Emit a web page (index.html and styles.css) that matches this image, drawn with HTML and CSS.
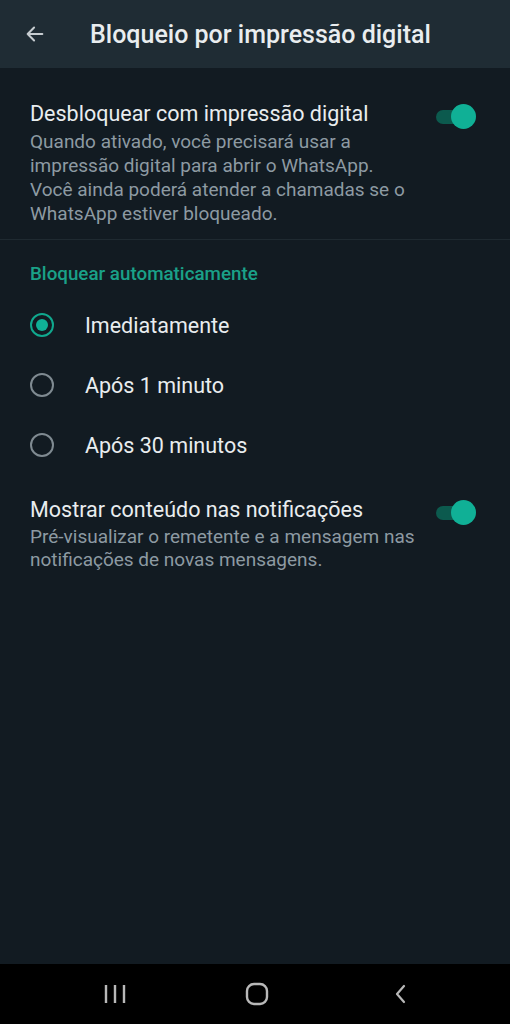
FILE: index.html
```html
<!DOCTYPE html>
<html lang="pt-BR">
<head>
    <meta charset="UTF-8">
    <meta name="viewport" content="width=device-width, initial-scale=1.0">
    <title>Bloqueio por impressão digital</title>
    <link rel="stylesheet" href="styles.css">
</head>
<body>
    <header class="appbar">
        <svg class="back" width="22" height="22" viewBox="0 0 24 24">
            <path d="M20 12H4M11 5l-7 7 7 7" fill="none" stroke="#c6ccd0" stroke-width="2.2" stroke-linecap="round" stroke-linejoin="round"/>
        </svg>
        <h1>Bloqueio por impressão digital</h1>
    </header>

    <main class="content">
        <div class="setting first">
            <div class="text">
                <div class="title">Desbloquear com impressão digital</div>
                <div class="desc">Quando ativado, você precisará usar a impressão digital para abrir o WhatsApp. Você ainda poderá atender a chamadas se o WhatsApp estiver bloqueado.</div>
            </div>
            <div class="switch"></div>
        </div>

        <div class="divider"></div>

        <div class="section-title">Bloquear automaticamente</div>
        <div class="radio-row">
            <span class="radio checked"></span>
            <span class="radio-label">Imediatamente</span>
        </div>
        <div class="radio-row">
            <span class="radio"></span>
            <span class="radio-label">Após 1 minuto</span>
        </div>
        <div class="radio-row">
            <span class="radio"></span>
            <span class="radio-label">Após 30 minutos</span>
        </div>

        <div class="setting second">
            <div class="text">
                <div class="title">Mostrar conteúdo nas notificações</div>
                <div class="desc narrow">Pré-visualizar o remetente e a mensagem nas notificações de novas mensagens.</div>
            </div>
            <div class="switch"></div>
        </div>
    </main>

    <nav class="navbar">
        <svg width="22" height="22" viewBox="0 0 22 22">
            <path d="M2 2v18M11 2v18M20 2v18" stroke="#b8b8b8" stroke-width="2.4"/>
        </svg>
        <svg width="24" height="24" viewBox="0 0 24 24">
            <rect x="2" y="2" width="20" height="20" rx="7" fill="none" stroke="#b8b8b8" stroke-width="2.4"/>
        </svg>
        <svg width="22" height="22" viewBox="0 0 22 22">
            <path d="M16 3l-7 8 7 8" fill="none" stroke="#b8b8b8" stroke-width="2.2" stroke-linecap="round" stroke-linejoin="round"/>
        </svg>
    </nav>
</body>
</html>
```

FILE: styles.css
```css
html, body {
    margin: 0;
    height: 100%;
}
body {
    display: flex;
    flex-direction: column;
    background-color: #121b22;
    font-family: Roboto, "Noto Sans", Arial, sans-serif;
    color: #e9edef;
}
.appbar {
    display: flex;
    align-items: center;
    height: 68px;
    padding-left: 24px;
    background-color: #1f2c34;
    flex-shrink: 0;
}
.appbar h1 {
    margin: 0 0 0 44px;
    font-size: 25px;
    font-weight: 500;
    color: #e9edef;
}
.back {
    display: block;
}
.content {
    flex: 1;
}
.setting {
    display: flex;
    justify-content: space-between;
    align-items: flex-start;
    padding: 0 34px 0 30px;
}
.setting.first {
    padding-top: 33px;
    padding-bottom: 13px;
}
.setting.second {
    padding-top: 22px;
}
.title {
    font-size: 21.5px;
    line-height: 26px;
    color: #e9edef;
}
.desc {
    margin-top: 3px;
    font-size: 19px;
    line-height: 24px;
    color: #8d9aa2;
    max-width: 380px;
}
.desc.narrow {
    margin-top: 2px;
    line-height: 23px;
    max-width: 395px;
}
.switch {
    position: relative;
    width: 40px;
    height: 26px;
    margin-top: 3px;
    flex-shrink: 0;
}
.switch::before {
    content: "";
    position: absolute;
    left: 0;
    top: 6px;
    width: 34px;
    height: 14px;
    border-radius: 7px;
    background-color: #0c5a4e;
}
.switch::after {
    content: "";
    position: absolute;
    right: 0;
    top: 0;
    width: 25px;
    height: 25px;
    border-radius: 50%;
    background-color: #10b096;
}
.divider {
    height: 1px;
    background-color: #1f2a31;
}
.section-title {
    padding: 24px 30px 0;
    font-size: 18.8px;
    line-height: 20px;
    font-weight: 500;
    color: #1aa188;
    margin-bottom: 11px;
}
.radio-row {
    display: flex;
    align-items: center;
    height: 60px;
    padding-left: 30px;
}
.radio {
    width: 20px;
    height: 20px;
    border: 2px solid #7f8a91;
    border-radius: 50%;
    box-sizing: content-box;
    display: flex;
    align-items: center;
    justify-content: center;
}
.radio.checked {
    border-color: #10a88e;
}
.radio.checked::after {
    content: "";
    width: 12px;
    height: 12px;
    border-radius: 50%;
    background-color: #10b096;
}
.radio-label {
    margin-left: 31px;
    font-size: 21.5px;
    color: #e9edef;
}
.navbar {
    display: grid;
    grid-template-columns: repeat(3, 142px);
    justify-content: center;
    justify-items: center;
    align-items: center;
    height: 60px;
    padding-left: 4px;
    background-color: #000;
    flex-shrink: 0;
}
.navbar svg {
    display: block;
}
```
